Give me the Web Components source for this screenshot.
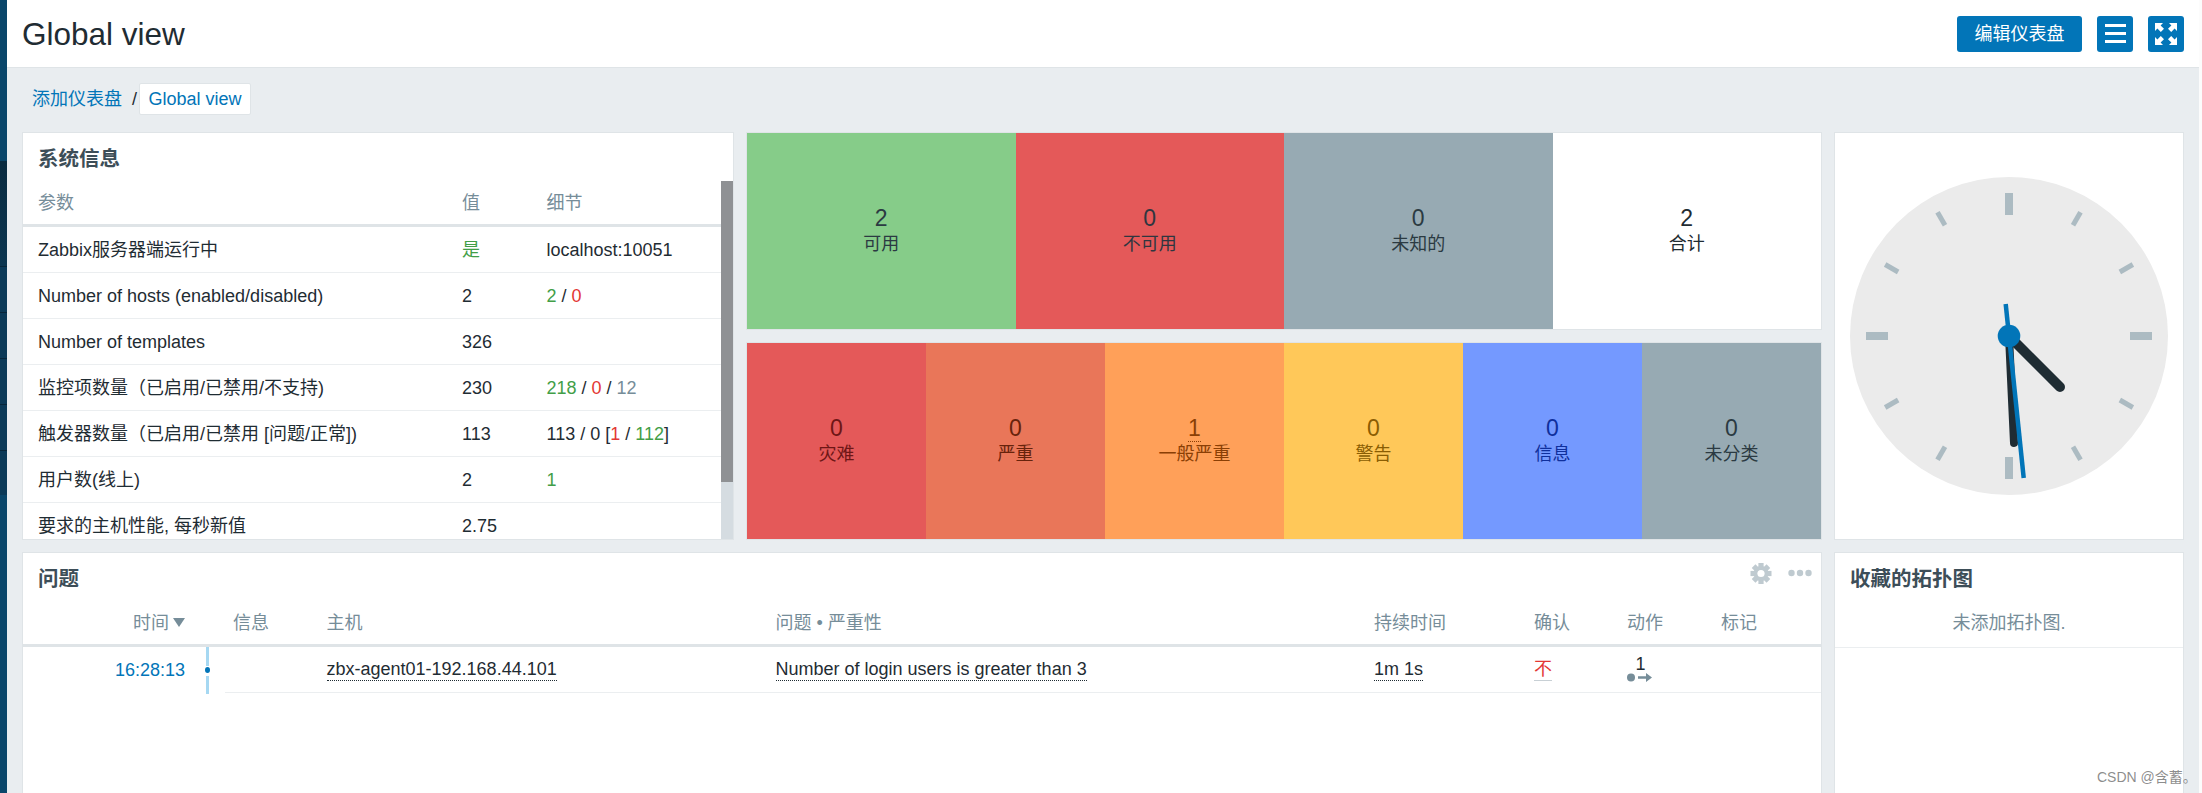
<!DOCTYPE html>
<html lang="zh">
<head>
<meta charset="utf-8">
<title>Global view</title>
<style>
html,body{margin:0;padding:0;height:793px;overflow:hidden;background:#fcfcfc;}
body{font:18px/24px "Liberation Sans","Noto Sans CJK SC",sans-serif;color:#1f2c33;}
</style>
</head>
<body>
<zbx-app>
  <zbx-sidebar></zbx-sidebar>
  <zbx-main>
    <zbx-header>Global view</zbx-header>
    <zbx-breadcrumb></zbx-breadcrumb>
    <zbx-dashboard>
      <zbx-widget heading="系统信息"><zbx-sysinfo></zbx-sysinfo></zbx-widget>
      <zbx-tilestack>
        <zbx-tilerow>
          <zbx-tile n="2" label="可用" bg="#86cc89" fg="#2b3a42"></zbx-tile>
          <zbx-tile n="0" label="不可用" bg="#e45959" fg="#2f3640"></zbx-tile>
          <zbx-tile n="0" label="未知的" bg="#97aab3" fg="#2b3a42"></zbx-tile>
          <zbx-tile n="2" label="合计" bg="#ffffff" fg="#1f2c33"></zbx-tile>
        </zbx-tilerow>
        <zbx-tilerow>
          <zbx-tile n="0" label="灾难" bg="#e45959" fg="#6e1616"></zbx-tile>
          <zbx-tile n="0" label="严重" bg="#e97659" fg="#67230c"></zbx-tile>
          <zbx-tile n="1" label="一般严重" bg="#ffa059" fg="#8a3f05" dotted></zbx-tile>
          <zbx-tile n="0" label="警告" bg="#ffc859" fg="#8a5d03"></zbx-tile>
          <zbx-tile n="0" label="信息" bg="#7499ff" fg="#0f2f9c"></zbx-tile>
          <zbx-tile n="0" label="未分类" bg="#97aab3" fg="#2b3a42"></zbx-tile>
        </zbx-tilerow>
      </zbx-tilestack>
      <zbx-clock></zbx-clock>
      <zbx-widget heading="问题" class="wide">
        <zbx-widget-tools slot="tools"></zbx-widget-tools>
        <zbx-problems></zbx-problems>
      </zbx-widget>
      <zbx-widget heading="收藏的拓扑图"><zbx-favmaps>未添加拓扑图.</zbx-favmaps></zbx-widget>
    </zbx-dashboard>
  </zbx-main>
  <zbx-watermark>CSDN @含蓄。</zbx-watermark>
</zbx-app>

<script>
function shadow(el, html){
  const r = el.attachShadow({mode:'open'});
  r.innerHTML = html;
  return r;
}
function def(name, html){
  customElements.define(name, class extends HTMLElement{
    constructor(){super(); shadow(this, typeof html==='function'?html(this):html);}
  });
}

def('zbx-app', `<style>
:host{display:flex;width:2202px;height:793px;position:relative;overflow:hidden;background:#fcfcfc;}
</style><slot></slot>`);

def('zbx-sidebar', `<style>
:host{display:flex;flex-direction:column;width:7px;height:793px;flex:none;background:#0a466a;}
.top{height:161px;}
.first{height:105px;background:linear-gradient(#0a2b40,#0c3650);}
.item{height:45px;background:#0c3a58;border-top:1px solid #08263a;}
.last{height:44px;background:#0c3a58;border-top:1px solid #08263a;}
</style><div class="top"></div><div class="first"></div><div class="item"></div><div class="item"></div><div class="item"></div><div class="item"></div><div class="last"></div>`);

def('zbx-main', `<style>
:host{display:block;width:2192px;flex:none;height:793px;overflow:hidden;background:#e9edf0;}
</style><slot></slot>`);

const BTN = `display:flex;align-items:center;justify-content:center;background:#0275b8;border-radius:3px;color:#fff;height:36px;`;
def('zbx-header', `<style>
:host{display:flex;align-items:center;height:67px;background:#fff;border-bottom:1px solid #dfe4e7;padding-left:15px;padding-right:15px;box-sizing:content-box;width:2162px;}
h1{margin:0;font-weight:400;font-size:31.5px;line-height:36px;flex:1;color:#1f2c33;}
.tools{display:flex;}
.edit{${BTN}width:125px;font-size:18px;}
.ico{${BTN}width:36px;}
.m{margin-left:15px;}
</style><h1><slot></slot></h1><div class="tools">
<div class="edit">编辑仪表盘</div>
<div class="ico m"><svg width="21" height="19" viewBox="0 0 21 19"><path fill="#fff" d="M0 0h21v3H0zM0 8h21v3H0zM0 16h21v3H0z"/></svg></div>
<div class="ico m"><svg width="22" height="22" viewBox="0 0 22 22"><g fill="#fff"><path d="M0 0h8L5.6 2.4 9 5.8 5.8 9 2.4 5.6 0 8z"/><path d="M22 0h-8l2.4 2.4L13 5.8 16.2 9l3.4-3.4L22 8z"/><path d="M0 22h8l-2.4-2.4L9 16.2 5.8 13l-3.4 3.4L0 14z"/><path d="M22 22h-8l2.4-2.4-3.4-3.4 3.2-3.2 3.4 3.4L22 14z"/></g></svg></div>
</div>`);

def('zbx-breadcrumb', `<style>
:host{display:flex;align-items:center;height:32px;padding:15px 0 17px 25px;width:400px;}
.a{color:#0275b8;}
.s{margin:0 2px 0 10px;color:#1f2c33;font-size:18px;}
.t{box-sizing:border-box;height:32px;width:112px;display:flex;align-items:center;justify-content:center;background:#fff;border:1px solid #dfe4e7;border-radius:2px;color:#0275b8;}
</style><span class="a">添加仪表盘</span><span class="s">/</span><span class="t">Global view</span>`);

def('zbx-dashboard', `<style>
:host{display:grid;grid-template-columns:712px 1076px 350px;grid-template-rows:408px 270px;gap:12px;margin-left:15px;}
::slotted(.wide){grid-column:1 / span 2;}
</style><slot></slot>`);

def('zbx-widget', el => `<style>
:host{display:flex;flex-direction:column;box-sizing:border-box;background:#fff;border:1px solid #dfe4e7;overflow:hidden;min-width:0;}
.head{display:flex;height:48px;flex:none;padding:0 9px 0 15px;align-items:center;box-sizing:border-box;}
h4{margin:0;flex:1;font-size:20.5px;line-height:24px;font-weight:700;color:#3d4e58;padding-top:4px;}
.body{flex:1;min-height:0;display:flex;flex-direction:column;}
</style><div class="head"><h4>${el.getAttribute('heading')||''}</h4><slot name="tools"></slot></div><div class="body"><slot></slot></div>`);

def('zbx-widget-tools', () => {
  let teeth = '';
  for (let i=0;i<8;i++) teeth += `<rect x="-2.6" y="-10.5" width="5.2" height="6" transform="rotate(${i*45})"/>`;
  return `<style>
:host{display:flex;align-self:flex-start;margin-top:10px;gap:16px;}
</style>
<svg width="22" height="21" viewBox="-11 -10.5 22 21" fill="#bfcad0">${teeth}<circle r="7.4"/><circle r="3.6" fill="#fff"/></svg>
<svg width="24" height="21" viewBox="0 0 24 21" fill="#bfcad0"><circle cx="3.5" cy="10" r="3.2"/><circle cx="12" cy="10" r="3.2"/><circle cx="20.5" cy="10" r="3.2"/></svg>`;
});

def('zbx-sysinfo', () => {
  const g = s => `<span style="color:#429e47">${s}</span>`;
  const r = s => `<span style="color:#e33734">${s}</span>`;
  const y = s => `<span style="color:#768d99">${s}</span>`;
  const rows = [
    ['Zabbix服务器端运行中', g('是'), 'localhost:10051'],
    ['Number of hosts (enabled/disabled)', '2', g('2')+' / '+r('0')],
    ['Number of templates', '326', ''],
    ['监控项数量（已启用/已禁用/不支持)', '230', g('218')+' / '+r('0')+' / '+y('12')],
    ['触发器数量（已启用/已禁用 [问题/正常])', '113', '113 / 0 ['+r('1')+' / '+g('112')+']'],
    ['用户数(线上)', '2', g('1')],
    ['要求的主机性能, 每秒新值', '2.75', ''],
  ];
  return `<style>
:host{display:flex;flex:1;min-height:0;overflow:hidden;}
.tbl{flex:1;min-width:0;}
.r{display:grid;grid-template-columns:439px 84.5px 1fr;align-items:center;}
.r>div:first-child{padding-left:15px;white-space:nowrap;}
.th{height:43px;border-bottom:3px solid #dfe4e7;color:#768d99;}
.td{height:45px;border-bottom:1px solid #ebeef0;}
.bar{width:12px;flex:none;background:#d5dce1;}
.thumb{height:301px;background:#8f9194;}
</style><div class="tbl">
<div class="r th"><div>参数</div><div>值</div><div>细节</div></div>
${rows.map(c=>`<div class="r td"><div>${c[0]}</div><div>${c[1]}</div><div>${c[2]}</div></div>`).join('')}
</div><div class="bar"><div class="thumb"></div></div>`;
});

def('zbx-tilestack', `<style>
:host{display:grid;grid-template-rows:198px 198px;gap:12px;}
</style><slot></slot>`);

def('zbx-tilerow', `<style>
:host{display:flex;border:1px solid #dfe4e7;background:#fff;min-width:0;}
::slotted(*){flex:1 1 0;min-width:0;}
</style><slot></slot>`);

def('zbx-tile', el => {
  const d = el.hasAttribute('dotted');
  return `<style>
:host{display:flex;flex-direction:column;align-items:center;justify-content:center;background:${el.getAttribute('bg')};color:${el.getAttribute('fg')};}
.n{font-size:23px;line-height:26px;position:relative;}
.n.d::after{content:"";position:absolute;left:0;right:0;margin:auto;width:13px;bottom:-1px;border-bottom:1px dotted currentColor;}
.l{font-size:18px;line-height:26px;}
</style><div class="n${d?' d':''}">${el.getAttribute('n')}</div><div class="l">${el.getAttribute('label')}</div>`;
});

def('zbx-clock', () => {
  let t = '';
  for (let i=0;i<12;i++){
    const a = i*30;
    t += i%3===0
      ? `<rect x="-4" y="-143" width="8" height="22" transform="rotate(${a})"/>`
      : `<rect x="-2.5" y="-143" width="5" height="15" transform="rotate(${a})"/>`;
  }
  return `<style>
:host{display:flex;align-items:center;justify-content:center;box-sizing:border-box;background:#fff;border:1px solid #dfe4e7;}
svg{display:block;}
</style><svg width="320" height="320" viewBox="-160 -160 320 320">
<circle r="159" fill="#ebebeb"/>
<g fill="#acbbc2">${t}</g>
<line x1="0" y1="0" x2="51" y2="51" stroke="#1f2c33" stroke-width="10" stroke-linecap="round"/>
<line x1="0" y1="0" x2="5" y2="107" stroke="#1f2c33" stroke-width="8" stroke-linecap="round"/>
<line x1="-3.3" y1="-32" x2="14.7" y2="142" stroke="#0275b8" stroke-width="4.5"/>
<circle r="11.3" fill="#0275b8"/>
</svg>`;
});

def('zbx-problems', `<style>
:host{display:block;}
.r{display:grid;grid-template-columns:162px 40px 101.5px 449px 598.5px 160px 93px 94px 1fr;}
.th{box-sizing:border-box;height:46px;border-bottom:3px solid #dfe4e7;color:#768d99;align-items:center;}
.th .time{display:flex;justify-content:flex-end;align-items:center;gap:4px;}
.tri{width:0;height:0;border-left:6px solid transparent;border-right:6px solid transparent;border-top:9px solid #768d99;}
.pl{padding-left:8px;}
.td{height:46px;align-items:stretch;}
.c{box-sizing:border-box;height:46px;border-bottom:1px solid #ebeef0;display:flex;align-items:center;}
.c.t{border:0;justify-content:flex-end;color:#0275b8;padding-bottom:1px;}
.tl{height:47px;display:flex;flex-direction:column;align-items:center;width:5px;margin-left:20px;}
.tl i{display:block;width:3px;background:#a6d8f2;}
.tl b{display:block;width:5px;height:6px;border-radius:50%;background:#0275b8;margin:1px 0 3px;}
.u{border-bottom:1px dotted #1f2c33;line-height:21px;}
.no{color:#e33734;border-bottom:1px solid #c8d0d5;line-height:21px;}
.act{display:flex;flex-direction:column;width:25px;align-items:center;margin-top:-2px;}
.act span{line-height:18px;margin-left:2px;}
</style>
<div class="r th"><div class="time">时间<span class="tri"></span></div><div></div><div class="pl">信息</div><div>主机</div><div>问题 • 严重性</div><div>持续时间</div><div>确认</div><div>动作</div><div>标记</div></div>
<div class="r td">
<div class="c t">16:28:13</div>
<div><div class="tl"><i style="height:19px"></i><b></b><i style="height:18px"></i></div></div>
<div class="c"></div>
<div class="c"><span class="u">zbx-agent01-192.168.44.101</span></div>
<div class="c"><span class="u">Number of login users is greater than 3</span></div>
<div class="c"><span class="u">1m 1s</span></div>
<div class="c"><span class="no">不</span></div>
<div class="c"><div class="act"><span>1</span><svg width="25" height="9" viewBox="0 0 25 9" fill="#768d99"><circle cx="4" cy="4.5" r="4"/><path d="M11 3.2h8V0l6 4.5-6 4.5V5.8h-8z"/></svg></div></div>
<div class="c"></div>
</div>`);

def('zbx-favmaps', `<style>
:host{display:flex;align-items:center;justify-content:center;height:47px;box-sizing:border-box;border-bottom:1px solid #ebeef0;color:#768d99;padding-bottom:3px;}
</style><slot></slot>`);

def('zbx-watermark', `<style>
:host{position:absolute;left:2097px;top:768px;font-size:14px;line-height:18px;color:rgba(120,120,120,.85);white-space:nowrap;}
</style><slot></slot>`);
</script>
</body>
</html>
